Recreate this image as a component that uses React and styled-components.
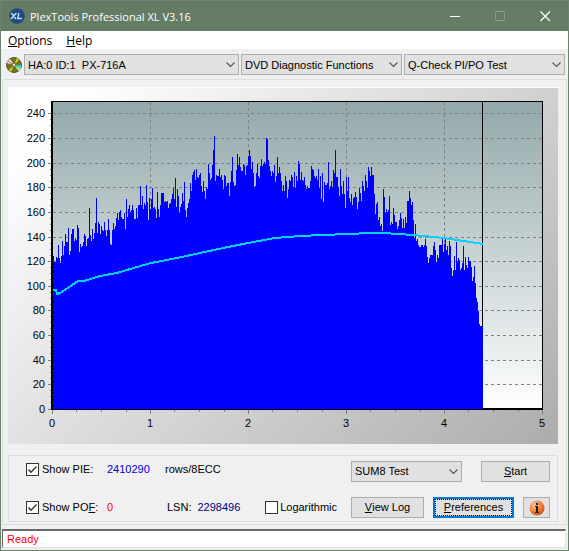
import styled, { createGlobalStyle } from "styled-components";

// distance of each PIE bar's tip from the top of the drawing, one entry per pixel column
const PIE = [
  176,182,182,177,178,165,178,183,176,161,175,166,154,162,162,148,175,171,154,149,149,161,158,160,145,148,172,164,167,166,
  162,154,156,166,159,158,128,155,161,149,159,153,143,118,153,142,144,154,146,150,151,142,150,156,150,139,150,164,165,150,
  143,149,146,138,133,140,132,130,137,139,139,133,149,119,137,129,125,132,130,125,130,139,139,128,138,125,125,106,125,116,
  129,123,125,105,122,140,118,129,119,108,128,127,129,138,112,129,137,125,113,113,113,122,121,122,121,128,124,123,119,114,
  108,119,98,127,109,116,133,127,124,113,121,102,130,137,128,123,119,
  103,111,95,92,90,100,89,97,98,95,93,106,112,101,111,119,107,109,84,93,100,98,85,70,56,101,95,96,96,89,
  97,95,100,109,95,96,106,103,103,116,102,91,77,102,106,105,90,74,85,77,87,91,91,84,85,95,86,85,76,70,
  76,89,82,93,107,106,93,84,96,98,86,79,86,84,82,84,58,59,80,86,91,96,91,93,85,102,96,77,93,87,
  93,101,111,105,111,96,101,118,109,100,101,95,97,107,92,108,96,101,81,84,100,92,100,101,97,105,109,106,108,108,
  101,86,89,90,96,98,96,100,89,108,96,119,93,122,102,105,105,103,82,109,106,101,107,90,93,70,97,97,107,116,
  89,106,114,101,114,128,97,111,97,118,122,114,125,118,117,112,117,129,122,108,113,121,101,106,111,95,101,108,87,91,
  96,87,95,95,114,134,124,122,140,137,146,144,151,109,117,133,129,132,130,116,145,142,144,128,135,142,142,149,146,140,
  133,138,148,139,148,137,143,121,121,111,118,125,122,140,158,144,161,159,165,167,167,165,165,167,165,159,166,177,183,178,
  175,175,175,166,162,170,182,175,178,165,165,165,159,172,164,159,170,166,175,161,166,188,196,190,176,190,162,181,178,180,
  190,188,183,166,190,177,185,188,177,181,181,187,201,197,186,203,218,222,231,244,246,246,246,
];

const SPEED = [
  [53, 210], [56, 210], [57, 214], [60, 213], [65, 210], [72, 205], [78, 201], [84, 201], [100, 196], [117, 193],
  [130, 189], [151, 183], [177, 178], [200, 173], [223, 168], [248, 163], [275, 158], [300, 156], [323, 155],
  [347, 154], [372, 153], [383, 153], [413, 155], [444, 158], [470, 162], [483, 164],
];

const LEVELS = [
  [240, 33], [220, 58], [200, 83], [180, 107], [160, 132], [140, 157], [120, 181],
  [100, 206], [80, 230], [60, 255], [40, 280], [20, 304], [0, 329],
];

const GIGABYTES = [52, 150, 248, 346, 444, 542];
const BASE = 329;

const Chevron = () => (
  <Arrow viewBox="0 0 9 6" aria-hidden="true">
    <path d="M0.5 0.5 L4.5 4.5 L8.5 0.5" fill="none" stroke="#555" strokeWidth="1.1" />
  </Arrow>
);

const Dropdown = ({ label, value }) => (
  <SelectBox>
    <Select aria-label={label} defaultValue={value}>
      <option>{value}</option>
    </Select>
    <Chevron />
  </SelectBox>
);

const Check = ({ id, checked }) => (
  <CheckBox>
    <CheckInput id={id} type="checkbox" defaultChecked={checked} />
    <CheckMark viewBox="0 0 13 13" aria-hidden="true">
      <path d="M2.5 6.5 L5 9.2 L10.5 3.6" fill="none" stroke="#333" strokeWidth="1.4" />
    </CheckMark>
  </CheckBox>
);

const Chart = () => {
  const bars = PIE.map((top, i) => `M${53 + i} ${BASE}V${top}h1V${BASE}z`).join("");
  const speed = SPEED.map((p) => p.join(" ")).join("L");
  return (
    <Graph viewBox="8 7 550 357" role="img" aria-label="PIE errors per gigabyte">
      <defs>
        <linearGradient id="frame" gradientUnits="userSpaceOnUse" x1="60" y1="-45" x2="506" y2="416">
          <stop offset="0.08" stopColor="#ffffff" />
          <stop offset="1" stopColor="#acacac" />
        </linearGradient>
        <linearGradient id="plot" x1="0" y1="0" x2="0" y2="1">
          <stop offset="0" stopColor="#92a8aa" />
          <stop offset="1" stopColor="#ffffff" />
        </linearGradient>
      </defs>
      <g shapeRendering="crispEdges">
        <rect x="8" y="7" width="550" height="357" fill="url(#frame)" />
        <rect x="8" y="7" width="550" height="1" fill="#fff" />
        <rect x="52" y="21" width="490" height="308" fill="url(#plot)" />
        {LEVELS.map(([n, y]) => (
          <g key={n}>
            <path d={`M48 ${y + 0.5}H52`} stroke="#808080" />
            {n > 0 && <path d={`M53 ${y + 0.5}H542`} stroke="#808080" strokeDasharray="3 3" />}
            {n > 0 && [6, 12, 18].map((d) => <path key={d} d={`M50 ${y + d + 0.5}h2`} stroke="#808080" />)}
          </g>
        ))}
        {GIGABYTES.map((x, i) => (
          <g key={x}>
            <path d={`M${x + 0.5} 329V334`} stroke="#808080" />
            {i > 0 && i < 5 && <path d={`M${x + 0.5} 22V329`} stroke="#808080" strokeDasharray="3 3" />}
            {i < 5 && [24, 49, 74].map((d) => <path key={d} d={`M${x + d + 0.5} 329v3`} stroke="#808080" />)}
          </g>
        ))}
        <path d="M482.5 21V329" stroke="#000" />
        <path d={bars} fill="#0000ff" />
        <path d={`M${speed}`} fill="none" stroke="#00d2ff" strokeWidth="2" />
        <path d="M51 21.5H543M542.5 21V330M51 329.5H543" fill="none" stroke="#000" />
        <path d="M483 328.5H542" stroke="#000" />
        <path d="M52 21V330" stroke="#000" strokeWidth="2" />
      </g>
      <g fill="#000">
        {LEVELS.map(([n, y]) => (
          <text key={n} x="45" y={y + 4} textAnchor="end">{n}</text>
        ))}
        {GIGABYTES.map((x, i) => (
          <text key={x} x={x} y="347" textAnchor="middle">{i}</text>
        ))}
      </g>
    </Graph>
  );
};

const App = () => {
  return (
    <Window>
      <GlobalStyle />
      <TitleBar>
        <svg width="16" height="16" viewBox="0 0 16 16" aria-hidden="true">
          <circle cx="8" cy="8" r="7.8" fill="#1c4a85" />
          <path d="M2.5 5 L7 11 M7.5 5 L2 11 M9.8 5 L8.8 10.5 H13" fill="none" stroke="#cfe0f2" strokeWidth="1.4" />
        </svg>
        <Title>PlexTools Professional XL V3.16</Title>
        <Caption aria-label="Minimize">
          <svg width="11" height="11"><path d="M0 5.5H10" stroke="#fff" /></svg>
        </Caption>
        <Caption aria-label="Maximize" disabled>
          <svg width="11" height="11"><path d="M0.5 0.5H9.5V9.5H0.5z" fill="none" stroke="#86a086" /></svg>
        </Caption>
        <Caption aria-label="Close">
          <svg width="11" height="11"><path d="M0.5 0.5L10 10M10 0.5L0.5 10" stroke="#fff" strokeWidth="1.2" /></svg>
        </Caption>
      </TitleBar>
      <MenuBar>
        <MenuItem><u>O</u>ptions</MenuItem>
        <MenuItem><u>H</u>elp</MenuItem>
      </MenuBar>
      <Toolbar>
        <svg width="16" height="16" viewBox="0 0 16 16" aria-hidden="true">
          <circle cx="8" cy="8" r="7.5" fill="#77770c" stroke="#555" />
          <path d="M8 8L1 6L2 3z" fill="#e8fff0" />
          <path d="M8 8L2 4L4 2z" fill="#f4f4d0" />
          <path d="M8 8L15 11L13 14z" fill="#e8fff0" />
          <path d="M8 8L15 8L15 11z" fill="#20d8d0" />
          <path d="M8 8L11 1L13 3z" fill="#d8cc20" />
          <path d="M8 8L5 15L3 13z" fill="#d8cc20" />
          <path d="M2 4L6 7" stroke="#d020b0" />
          <path d="M10 9L14 12" stroke="#20c040" />
          <circle cx="8" cy="8" r="1.8" fill="#ddd" stroke="#666" />
        </svg>
        <Dropdown label="Drive" value={"HA:0 ID:1\u00a0 PX-716A"} />
        <Dropdown label="Function" value="DVD Diagnostic Functions" />
        <Dropdown label="Test" value="Q-Check PI/PO Test" />
      </Toolbar>
      <Page>
        <Chart />
        <Controls>
          <ControlRow $align="flex-start">
            <Field>
              <Check id="pie" checked />
              <label htmlFor="pie">Show PIE:</label>
            </Field>
            <Value $color="#0000e0">2410290</Value>
            <span>rows/8ECC</span>
            <Actions $gap="19px">
              <TestSelect>
                <Dropdown label="Sum" value="SUM8 Test" />
              </TestSelect>
              <Button $width="69px"><u>S</u>tart</Button>
            </Actions>
          </ControlRow>
          <ControlRow $align="center">
            <Field>
              <Check id="pof" checked />
              <label htmlFor="pof">Show PO<u>F</u>:</label>
            </Field>
            <Value $color="#ff0000">0</Value>
            <Lsn>LSN: <Value $color="#000080">2298496</Value></Lsn>
            <Actions $gap="9px">
              <Logarithmic>
                <Check id="log" />
                <label htmlFor="log">Logarithmic</label>
              </Logarithmic>
              <Button $width="73px"><u>V</u>iew Log</Button>
              <Button $width="81px" $default><u>P</u>references</Button>
              <Button $width="27px" aria-label="Information">
                <svg width="16" height="16" viewBox="0 0 16 16">
                  <defs>
                    <radialGradient id="ball" cx="0.35" cy="0.3" r="0.75">
                      <stop offset="0" stopColor="#ffc49a" />
                      <stop offset="0.6" stopColor="#ee7b35" />
                      <stop offset="1" stopColor="#c8581a" />
                    </radialGradient>
                  </defs>
                  <circle cx="8" cy="8" r="7.5" fill="url(#ball)" />
                  <path d="M7 3h2v2h-2zM6 6h3v6h1v1H6v-1h1V7H6z" fill="#222" />
                </svg>
              </Button>
            </Actions>
          </ControlRow>
        </Controls>
      </Page>
      <Status>Ready</Status>
    </Window>
  );
};

const GlobalStyle = createGlobalStyle`
  * {
    box-sizing: border-box;
  }
  body {
    margin: 0;
    background: #f0f0f0;
    font-family: "Liberation Sans", Arial, sans-serif;
    font-size: 11px;
    color: #000;
  }
  button, select, input {
    font: inherit;
    color: inherit;
    margin: 0;
  }
  svg {
    display: block;
    flex: none;
  }
`;

const Window = styled.main`
  background: #f0f0f0;
  border: 1px solid #6b836b;
  border-top: none;
`;

const TitleBar = styled.header`
  height: 31px;
  display: flex;
  align-items: center;
  padding-left: 8px;
  background: #647c64;
  border-top: 1px solid #6f8a6f;
  color: #fff;
`;

const Title = styled.h1`
  flex: 1;
  margin: 0 0 0 5px;
  font: 400 11px "Open Sans", sans-serif;
`;

const Caption = styled.button`
  width: 45px;
  height: 30px;
  display: flex;
  align-items: center;
  justify-content: center;
  padding: 0;
  background: none;
  border: none;
`;

const MenuBar = styled.nav`
  height: 18px;
  display: flex;
  align-items: center;
  gap: 14px;
  padding: 2px 7px 0;
  background: #fff;
`;

const MenuItem = styled.button`
  padding: 0;
  background: none;
  border: none;
  font: 400 12px/18px "Open Sans", sans-serif;
`;

const Toolbar = styled.div`
  display: grid;
  grid-template-columns: 16px 215fr 161fr 161fr;
  align-items: center;
  gap: 2px;
  padding: 5px 3px 4px 5px;
`;

const SelectBox = styled.div`
  display: grid;
  align-items: center;
`;

const Select = styled.select`
  grid-area: 1 / 1;
  width: 100%;
  height: 21px;
  padding: 0 18px 0 3px;
  appearance: none;
  background: #e1e1e1;
  border: 1px solid #adadad;
  border-radius: 0;
`;

const Arrow = styled.svg`
  grid-area: 1 / 1;
  justify-self: end;
  width: 9px;
  height: 6px;
  margin-right: 4px;
  pointer-events: none;
`;

const Page = styled.section`
  margin: 0 1px 4px;
  padding: 7px 8px 2px 5px;
  border: 1px solid #dcdcdc;
`;

const Graph = styled.svg`
  width: 100%;
  height: auto;
  font-size: 11px;
`;

const Controls = styled.div`
  margin-top: 11px;
  padding: 5px 7px 3px 17px;
  border: 1px solid #dcdcdc;
`;

const ControlRow = styled.div`
  height: 21px;
  display: flex;
  align-items: ${(props) => props.$align};
  line-height: 17px;
  & + & {
    margin-top: 15px;
  }
`;

const Field = styled.div`
  width: 81px;
  display: flex;
  align-items: center;
  gap: 3px;
`;

const Logarithmic = styled(Field)`
  width: auto;
  gap: 2px;
  margin-right: 5px;
`;

const CheckBox = styled.span`
  display: grid;
`;

const CheckInput = styled.input`
  grid-area: 1 / 1;
  width: 13px;
  height: 13px;
  appearance: none;
  background: #fff;
  border: 1px solid #333;
  &:not(:checked) + svg {
    visibility: hidden;
  }
`;

const CheckMark = styled.svg`
  grid-area: 1 / 1;
  width: 13px;
  height: 13px;
  pointer-events: none;
`;

const Value = styled.output`
  min-width: 58px;
  color: ${(props) => props.$color};
`;

const Lsn = styled.div`
  display: flex;
  gap: 6px;
  padding-left: 2px;
`;

const Actions = styled.div`
  display: flex;
  align-items: center;
  gap: ${(props) => props.$gap};
  margin-left: auto;
`;

const TestSelect = styled.div`
  width: 111px;
`;

const Button = styled.button`
  width: ${(props) => props.$width};
  height: 21px;
  display: flex;
  align-items: center;
  justify-content: center;
  padding: 0;
  background: #e1e1e1;
  border: ${(props) => (props.$default ? "2px solid #0078d7" : "1px solid #adadad")};
  outline: ${(props) => (props.$default ? "1px dotted #000" : "none")};
  outline-offset: -3px;
`;

const Status = styled.footer`
  height: 19px;
  margin: 0 2px 2px 1px;
  padding-left: 4px;
  line-height: 17px;
  background: #fff;
  border: 1px solid #e3e3e3;
  border-top: 2px solid #696969;
  border-left-color: #696969;
  color: #ff0000;
`;

export default App;
